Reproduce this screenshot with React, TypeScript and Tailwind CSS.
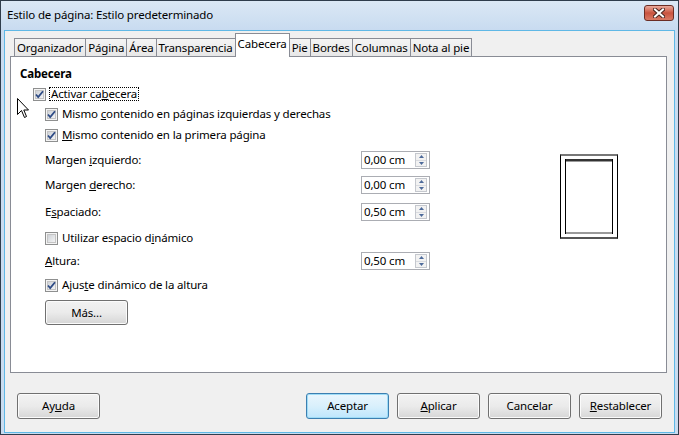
import React from "react";

function Check({ checked }: { checked?: boolean }) {
  return (
    <svg width="13" height="13" viewBox="0 0 13 13" className="shrink-0">
      <rect x="0.5" y="0.5" width="12" height="12" fill="#f4f4f4" stroke="#8e8f8f" />
      <rect x="2.5" y="2.5" width="8" height="8" fill="url(#cbg)" stroke="#c4c4c4" />
      <defs>
        <linearGradient id="cbg" x1="0" y1="0" x2="1" y2="1">
          <stop offset="0" stopColor="#cbcfd5" />
          <stop offset="1" stopColor="#f6f6f6" />
        </linearGradient>
      </defs>
      {checked && (
        <path d="M3 6.5 L5.2 9 L10 3.2" fill="none" stroke="#2e4b85" strokeWidth="1.8" />
      )}
    </svg>
  );
}

function Spin({ value }: { value: string }) {
  return (
    <div className="w-[69px] h-[18px] border border-[#abadb3] bg-white flex items-center justify-between pl-[2px] pr-[2px] ml-auto">
      <span className="leading-none">{value}</span>
      <div className="w-[12px] h-[14px] border border-[#c5c8ce] flex flex-col bg-[#f2f2f2]">
        <div className="flex-1 flex items-center justify-center border-b border-[#d9dbe0]">
          <svg width="5" height="3" viewBox="0 0 5 3"><path d="M0 3 L2.5 0 L5 3 Z" fill="#4d6a9a" /></svg>
        </div>
        <div className="flex-1 flex items-center justify-center">
          <svg width="5" height="3" viewBox="0 0 5 3"><path d="M0 0 L2.5 3 L5 0 Z" fill="#4d6a9a" /></svg>
        </div>
      </div>
    </div>
  );
}

function Btn({ children, focused }: { children: React.ReactNode; focused?: boolean }) {
  return (
    <button
      className={
        focused
          ? "w-[83px] h-[26px] rounded-[3px] border border-[#3c7fb1] shadow-[inset_0_0_0_1px_#9fdcf6] bg-gradient-to-b from-[#eaf6fd] via-[#d9f0fc] to-[#bee6fd]"
          : "w-[83px] h-[26px] rounded-[3px] border border-[#707070] shadow-[inset_0_0_0_1px_#fbfbfb] bg-gradient-to-b from-[#f2f2f2] via-[#ebebeb] to-[#d6d6d6]"
      }
    >
      {children}
    </button>
  );
}

const tabs = ["Organizador", "Página", "Área", "Transparencia", "Cabecera", "Pie", "Bordes", "Columnas", "Nota al pie"];

export default function App() {
  return (
    <div className="relative w-[679px] h-[435px] border border-[#2f3d4c] bg-[#c9dcf0] flex flex-col text-[11.5px] tracking-[-0.15px] text-black font-['Noto_Sans',sans-serif]">
      <div className="h-[29px] flex items-start justify-between pl-[6px] pr-[4px] bg-gradient-to-b from-[#dbe8f5] to-[#c8dbf0]">
        <span className="mt-[5px]">Estilo de página: Estilo predeterminado</span>
        <div className="w-[30px] h-[16px] mt-[4px] rounded-[3px] border border-[#6b2d24] bg-gradient-to-b from-[#e9a99b] via-[#c9533f] to-[#d97a66] flex items-center justify-center">
          <svg width="12" height="10" viewBox="0 0 12 10">
            <path d="M2 1.5 L10 8.5 M10 1.5 L2 8.5" stroke="#4a2520" strokeWidth="4" strokeLinecap="square" />
            <path d="M2 1.5 L10 8.5 M10 1.5 L2 8.5" stroke="#ffffff" strokeWidth="2" strokeLinecap="square" />
          </svg>
        </div>
      </div>

      <div className="flex-1 mx-[3px] mb-[1px] bg-[#f0f0f0] border border-[#5fb8e6] flex flex-col">
        <div className="ml-[5px] mr-[7px] pt-[2px]">
          <div className="flex items-end pl-[4px] h-[24px] relative z-10 -mb-px">
            {tabs.map((t) =>
              t === "Cabecera" ? (
                <div key={t} className="-ml-px h-[24px] px-[2px] pb-[3px] flex items-center bg-white border border-b-0 border-[#898c95]">
                  {t}
                </div>
              ) : (
                <div key={t} className="-ml-px h-[19px] px-[2px] flex items-center bg-gradient-to-b from-[#f4f4f4] to-[#e7e7e7] border border-[#898c95] first:ml-0">
                  {t}
                </div>
              )
            )}
          </div>

          <div className="h-[317px] bg-white border border-[#898c95] flex">
            <div className="w-[419px] flex flex-col">
              <div className="mt-[8px] h-[18px] pl-[9px] flex items-center font-bold">Cabecera</div>
              <div className="mt-[2px] h-[18px] pl-[22px] flex items-center gap-[3px]">
                <Check checked />
                <span className="border border-dotted border-black px-px leading-[12px]">
                  Activar ca<u>b</u>ecera
                </span>
              </div>
              <div className="mt-[2px] h-[18px] pl-[34px] flex items-center gap-[4px]">
                <Check checked />
                <span>Mismo <u>c</u>ontenido en páginas izquierdas y derechas</span>
              </div>
              <div className="mt-[3px] h-[18px] pl-[34px] flex items-center gap-[4px]">
                <Check checked />
                <span><u>M</u>ismo contenido en la primera página</span>
              </div>
              <div className="mt-[7px] h-[18px] pl-[34px] flex items-center">
                <span>Margen <u>i</u>zquierdo:</span>
                <Spin value="0,00 cm" />
              </div>
              <div className="mt-[7px] h-[18px] pl-[34px] flex items-center">
                <span>Margen <u>d</u>erecho:</span>
                <Spin value="0,00 cm" />
              </div>
              <div className="mt-[9px] h-[18px] pl-[34px] flex items-center">
                <span>E<u>s</u>paciado:</span>
                <Spin value="0,50 cm" />
              </div>
              <div className="mt-[8px] h-[18px] pl-[34px] flex items-center gap-[4px]">
                <Check />
                <span>Utilizar espacio d<u>i</u>námico</span>
              </div>
              <div className="mt-[5px] h-[18px] pl-[34px] flex items-center">
                <span><u>A</u>ltura:</span>
                <Spin value="0,50 cm" />
              </div>
              <div className="mt-[6px] h-[18px] pl-[34px] flex items-center gap-[4px]">
                <Check checked />
                <span>Ajus<u>t</u>e dinámico de la altura</span>
              </div>
              <div className="mt-[6px] pl-[34px]">
                <button className="w-[83px] h-[25px] rounded-[3px] border border-[#707070] shadow-[inset_0_0_0_1px_#fbfbfb] bg-gradient-to-b from-[#f2f2f2] via-[#ebebeb] to-[#d6d6d6]">
                  Más...
                </button>
              </div>
            </div>

            <div className="ml-[130px] mt-[97px] w-[58px] h-[85px] border border-black border-t-[#777] border-b-[#555] border-t-2 border-b-2 bg-white p-[4px] pt-[3px] pb-[3px]">
              <div className="h-full border-x border-black flex flex-col">
                <div className="h-[2px] bg-[#333]" />
                <div className="h-[1px] bg-[#999]" />
                <div className="flex-1" />
                <div className="h-[2px] bg-[#9a9a9a]" />
              </div>
            </div>
          </div>
        </div>

        <div className="mt-[20px] px-[12px] flex items-center">
          <Btn>
            Ay<u>u</u>da
          </Btn>
          <div className="ml-auto flex gap-[8px]">
            <Btn focused>Aceptar</Btn>
            <Btn>
              <u>A</u>plicar
            </Btn>
            <Btn>Cancelar</Btn>
            <Btn>
              <u>R</u>establecer
            </Btn>
          </div>
        </div>
      </div>

      <svg className="absolute left-[16px] top-[97px]" width="13" height="20" viewBox="0 0 13 20">
        <path d="M0.5 0.5 L0.5 16.5 L4.5 12.5 L7.5 19.5 L9.5 18.5 L6.8 12 L11.5 12 Z" fill="#fff" stroke="#000" strokeLinejoin="miter" />
      </svg>
    </div>
  );
}
